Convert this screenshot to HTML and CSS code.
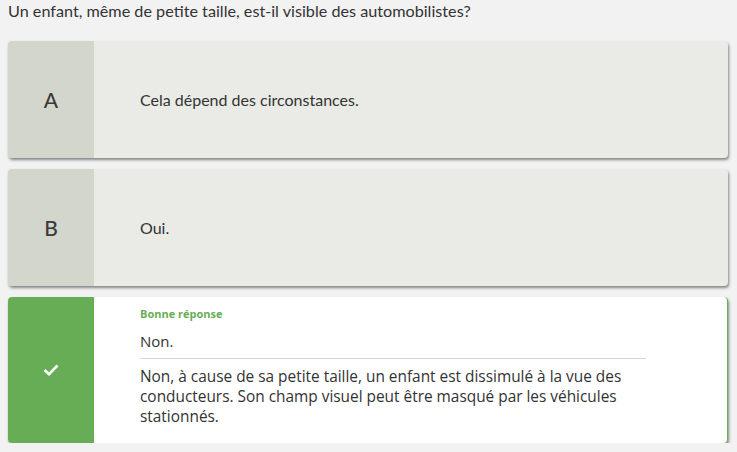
FILE: index.html
```html
<!DOCTYPE html>
<html lang="fr">
<head>
<meta charset="utf-8">
<title>Question</title>
<link rel="stylesheet" href="styles.css">
</head>
<body>
<div class="page">
  <p class="question">Un enfant, même de petite taille, est-il visible des automobilistes?</p>
  <div class="answers">
    <div class="card">
      <div class="letter">A</div>
      <div class="text">Cela dépend des circonstances.</div>
    </div>
    <div class="card">
      <div class="letter">B</div>
      <div class="text">Oui.</div>
    </div>
    <div class="card correct">
      <div class="letter">
        <svg width="16" height="12" viewBox="0 0 16 12"><polyline points="1.5,6 6,10.2 14.5,1.5" fill="none" stroke="#fff" stroke-width="2.6" stroke-linecap="butt" stroke-linejoin="miter"/></svg>
      </div>
      <div class="detail">
        <div class="label">Bonne réponse</div>
        <div class="answer">Non.</div>
        <div class="explain">Non, à cause de sa petite taille, un enfant est dissimulé à la vue des conducteurs. Son champ visuel peut être masqué par les véhicules stationnés.</div>
      </div>
    </div>
  </div>
</div>
</body>
</html>
```
FILE: styles.css
```css
html, body {
  margin: 0;
  padding: 0;
  background: #f2f2f2;
}
.page {
  padding: 1px 9px 0 8px;
  font-family: Lato, "Liberation Sans", sans-serif;
  color: #333;
}
.question {
  margin: 0;
  font-size: 16.2px;
  line-height: 20px;
}
.answers {
  margin-top: 20px;
  display: flex;
  flex-direction: column;
  gap: 11px;
}
.card {
  display: flex;
  min-height: 117px;
  background: #eaebe6;
  border-radius: 4px;
  box-shadow: 1px 2px 3px rgba(0,0,0,0.45);
  overflow: hidden;
}
.letter {
  flex: 0 0 86px;
  background: #d3d6cc;
  display: flex;
  align-items: center;
  justify-content: center;
  font-size: 21px;
  font-weight: 500;
  color: #3a3a3a;
}
.text {
  display: flex;
  align-items: center;
  padding-left: 46px;
  font-size: 16px;
}
.correct {
  background: #fff;
  border-right: 1px solid #66ad55;
}
.correct .letter {
  background: #66ad55;
}
.detail {
  width: 506px;
  margin-left: 46px;
  padding: 10px 0 16px;
  font-family: "Open Sans", "Noto Sans", sans-serif;
}
.label {
  font-size: 11px;
  line-height: 14px;
  font-weight: 700;
  color: #66ad55;
}
.answer {
  margin-top: 10px;
  font-size: 15px;
  line-height: 20px;
  padding-bottom: 7px;
  border-bottom: 1px solid #d6d6cc;
}
.explain {
  margin-top: 8px;
  font-size: 15.4px;
  line-height: 20px;
}
```
